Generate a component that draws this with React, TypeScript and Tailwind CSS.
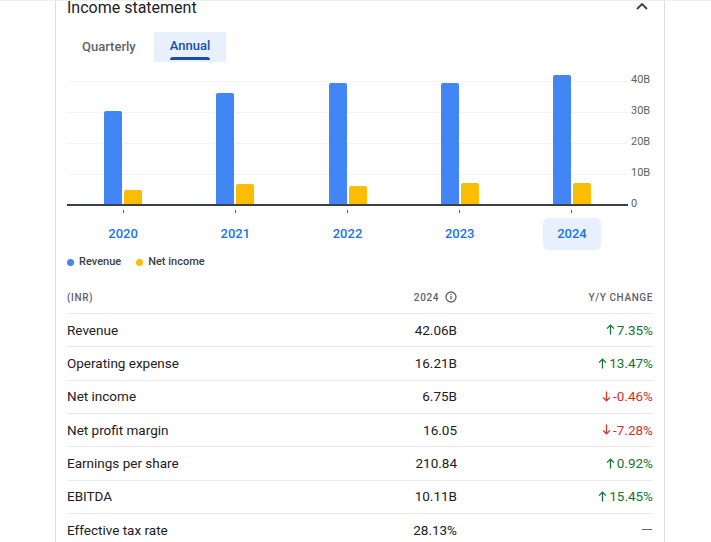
import React from "react";

const years = [
  { year: "2020", revenue: 30.2, net: 4.55 },
  { year: "2021", revenue: 36.1, net: 6.5 },
  { year: "2022", revenue: 39.3, net: 5.9 },
  { year: "2023", revenue: 39.2, net: 6.8 },
  { year: "2024", revenue: 42.06, net: 6.75 },
];

const rows = [
  { label: "Revenue", value: "42.06B", change: "7.35%", dir: "up" },
  { label: "Operating expense", value: "16.21B", change: "13.47%", dir: "up" },
  { label: "Net income", value: "6.75B", change: "-0.46%", dir: "down" },
  { label: "Net profit margin", value: "16.05", change: "-7.28%", dir: "down" },
  { label: "Earnings per share", value: "210.84", change: "0.92%", dir: "up" },
  { label: "EBITDA", value: "10.11B", change: "15.45%", dir: "up" },
  { label: "Effective tax rate", value: "28.13%", change: "", dir: "none" },
];

const SCALE = 3.075;

function Arrow({ up }: { up: boolean }) {
  return (
    <svg width="9" height="11" viewBox="0 0 9 11" fill="none" stroke="currentColor" strokeWidth="1.3">
      {up ? (
        <path d="M4.5 10.5V1.2M1 4.6l3.5-3.5L8 4.6" />
      ) : (
        <path d="M4.5 0.5v9.3M1 6.4l3.5 3.5L8 6.4" />
      )}
    </svg>
  );
}

export default function App() {
  return (
    <div className="w-[711px] h-[542px] overflow-hidden bg-white font-['Roboto',sans-serif] border-t border-[#eeeeee]">
      <div className="ml-[55px] w-[610px] h-full border-x border-[#dadce0] px-[11px]">
        {/* header */}
        <div className="flex items-start justify-between h-[12px]">
          <h2 className="text-[16px] leading-[20px] -mt-[3px] text-[#202124]">Income statement</h2>
          <svg width="12" height="8" viewBox="0 0 12 8" fill="none" stroke="#3c4043" strokeWidth="1.8" className="mr-[5px] mt-[1px]">
            <path d="M1 7l5-5 5 5" />
          </svg>
        </div>

        {/* tabs */}
        <div className="flex mt-[19px] h-[30px] text-[13px] font-medium">
          <div className="pl-[15px] pr-[18px] flex items-center text-[#5f6368]">Quarterly</div>
          <div className="px-[16px] flex flex-col items-center justify-center bg-[#e8f0fe] text-[#174ea6] relative">
            <span className="leading-[16px] mt-[-2px]">Annual</span>
            <span className="absolute bottom-[2px] left-[16px] right-[16px] h-[3px] bg-[#174ea6] rounded-t-sm" />
          </div>
        </div>

        {/* chart */}
        <div className="flex mt-[3px]">
          <div className="w-[561px]">
            <div className="relative h-[141px] border-b-2 border-[#3c4043]">
              <div className="absolute left-0 right-0 top-[16px] h-px bg-[#f1f3f4]" />
              <div className="absolute left-0 right-0 top-[47px] h-px bg-[#f1f3f4]" />
              <div className="absolute left-0 right-0 top-[78px] h-px bg-[#f1f3f4]" />
              <div className="absolute left-0 right-0 top-[109px] h-px bg-[#f1f3f4]" />
              <div className="relative flex h-full">
                {years.map((y) => (
                  <div key={y.year} className="flex-1 flex items-end justify-center gap-[2px]">
                    <div
                      className="w-[18px] bg-[#4285f4] rounded-t-[2px]"
                      style={{ height: Math.round(y.revenue * SCALE) }}
                    />
                    <div
                      className="w-[18px] bg-[#fbbc04] rounded-t-[2px]"
                      style={{ height: Math.round(y.net * SCALE) }}
                    />
                  </div>
                ))}
              </div>
            </div>
            <div className="flex h-[13px]">
              {years.map((y) => (
                <div key={y.year} className="flex-1 flex justify-center">
                  <div className="w-px h-[3px] mt-[4px] bg-[#5f6368]" />
                </div>
              ))}
            </div>
            <div className="flex -mt-px">
              {years.map((y) => (
                <div key={y.year} className="flex-1 flex justify-center">
                  <div
                    className={
                      y.year === "2024"
                        ? "w-[58px] h-[32px] rounded-md bg-[#e8f0fe] flex items-center justify-center text-[13px] font-medium text-[#1a73e8]"
                        : "w-[58px] h-[32px] rounded-md flex items-center justify-center text-[13px] font-medium text-[#1a73e8]"
                    }
                  >
                    {y.year}
                  </div>
                </div>
              ))}
            </div>
          </div>
          <div className="flex-1 flex flex-col gap-[11px] pt-[5px] pl-[3px] text-[11px] leading-[20px] text-[#5f6368]">
            <div className="h-[20px]">40B</div>
            <div className="h-[20px]">30B</div>
            <div className="h-[20px]">20B</div>
            <div className="h-[20px]">10B</div>
            <div className="h-[20px]">0</div>
          </div>
        </div>

        {/* legend */}
        <div className="flex items-center h-[14px] mt-[5px] text-[11px] font-medium text-[#3c4043]">
          <span className="w-[7px] h-[7px] rounded-full bg-[#4285f4]" />
          <span className="ml-[5px]">Revenue</span>
          <span className="ml-[15px] w-[7px] h-[7px] rounded-full bg-[#fbbc04]" />
          <span className="ml-[5px]">Net income</span>
        </div>

        {/* table */}
        <div className="mt-[11px]">
          <div className="grid grid-cols-[1fr_120px_196px] items-center h-[33px] text-[10px] font-medium tracking-[0.6px] text-[#5f6368]">
            <div className="mt-px">(INR)</div>
            <div className="flex items-center justify-end gap-[6px] mt-px">
              <span>2024</span>
              <svg width="12" height="12" viewBox="0 0 12 12" fill="none">
                <circle cx="6" cy="6" r="5" stroke="#5f6368" strokeWidth="1.3" />
                <rect x="5.35" y="5" width="1.3" height="3.6" fill="#5f6368" />
                <rect x="5.35" y="3" width="1.3" height="1.2" fill="#5f6368" />
              </svg>
            </div>
            <div className="text-right mt-px">Y/Y CHANGE</div>
          </div>
          {rows.map((r) => (
            <div
              key={r.label}
              className="grid grid-cols-[1fr_120px_196px] items-center h-[33.35px] border-t border-[#e8eaed] text-[13.5px] text-[#202124]"
            >
              <div className="-mt-px">{r.label}</div>
              <div className="text-right -mt-px">{r.value}</div>
              <div className="flex items-center justify-end -mt-px">
                {r.dir === "none" ? (
                  <span className="w-[10px] h-[1.5px] bg-[#5f6368] mr-[1px]" />
                ) : (
                  <span
                    className={
                      r.dir === "up"
                        ? "flex items-center gap-[2px] text-[#137333]"
                        : "flex items-center gap-[2px] text-[#d93025]"
                    }
                  >
                    <Arrow up={r.dir === "up"} />
                    {r.change}
                  </span>
                )}
              </div>
            </div>
          ))}
        </div>
      </div>
    </div>
  );
}
